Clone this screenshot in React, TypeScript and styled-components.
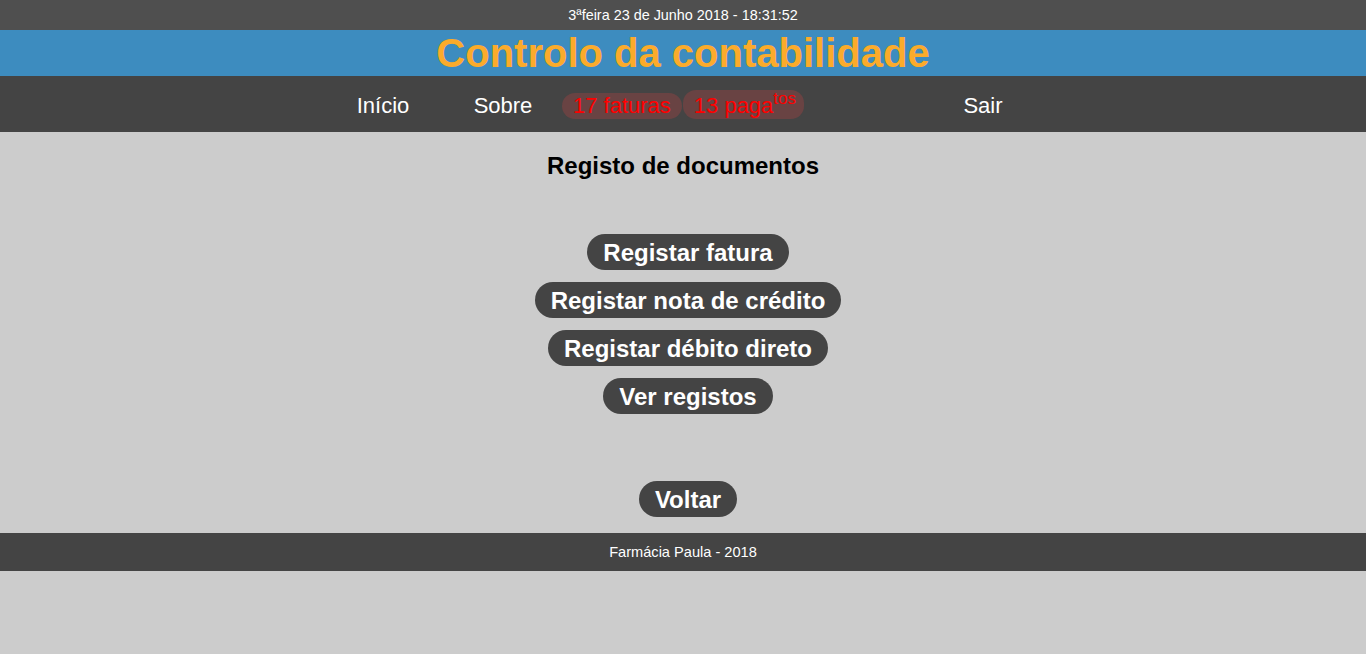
import React from "react";
import styled, { createGlobalStyle } from "styled-components";

const Global = createGlobalStyle`
  html, body { margin: 0; padding: 0; background: #cccccc; }
  body { font-family: "Liberation Sans", Arial, sans-serif; }
`;

const TopBar = styled.div`
  height: 30px;
  background: #4f4f4f;
  color: #ffffff;
  font-size: 14.4px;
  line-height: 30px;
  text-align: center;
`;

const Banner = styled.header`
  height: 46px;
  background: #3d8cbf;
  color: #fbab2b;
  font-size: 40px;
  font-weight: bold;
  line-height: 46px;
  text-align: center;
`;

const Nav = styled.nav`
  height: 56px;
  box-sizing: border-box;
  padding-top: 14px;
  background: #444444;
  display: flex;
  justify-content: center;
  align-items: flex-start;
`;

const NavList = styled.div`
  width: 720px;
  display: grid;
  grid-template-columns: repeat(6, 120px);
  align-items: baseline;
`;

const NavLink = styled.a`
  color: #ffffff;
  font-size: 22px;
  line-height: 26px;
  text-align: center;
  text-decoration: none;
`;

const Counters = styled.div`
  grid-column: span 2;
  display: flex;
  align-items: baseline;
  justify-content: center;
  gap: 1px;
`;

const Badge = styled.span`
  display: inline-block;
  padding: 0 11px;
  border-radius: 13px;
  background: #694343;
  color: #ff0000;
  font-size: 22px;
  line-height: 26px;
  white-space: nowrap;
  sup {
    font-size: 17px;
    line-height: 17px;
    vertical-align: 9px;
    margin-right: -3px;
  }
`;

const Main = styled.main`
  height: 401px;
  box-sizing: border-box;
  padding-top: 20px;
  display: flex;
  flex-direction: column;
  align-items: center;
`;

const Heading = styled.h2`
  margin: 0 0 54px;
  font-size: 24px;
  line-height: 28px;
  font-weight: bold;
  color: #000000;
`;

const ButtonStack = styled.div`
  display: flex;
  flex-direction: column;
  align-items: center;
  gap: 12px;
  padding-left: 10px;
`;

const PillButton = styled.a<{ $gapTop?: number }>`
  display: inline-block;
  height: 36px;
  padding: 0 16px;
  border-radius: 18px;
  background: #444444;
  color: #ffffff;
  font-size: 24px;
  font-weight: bold;
  line-height: 37px;
  text-decoration: none;
  margin-top: ${(p) => p.$gapTop ?? 0}px;
`;

const Footer = styled.footer`
  height: 38px;
  background: #444444;
  color: #ffffff;
  font-size: 14.6px;
  line-height: 38px;
  text-align: center;
`;

export default function App() {
  return (
    <>
      <Global />
      <TopBar>3ªfeira 23 de Junho 2018 - 18:31:52</TopBar>
      <Banner>Controlo da contabilidade</Banner>
      <Nav>
        <NavList>
          <NavLink href="#">Início</NavLink>
          <NavLink href="#">Sobre</NavLink>
          <Counters>
            <Badge>17 faturas</Badge>
            <Badge>
              13 paga<sup>tos</sup>
            </Badge>
          </Counters>
          <span />
          <NavLink href="#">Sair</NavLink>
        </NavList>
      </Nav>
      <Main>
        <Heading>Registo de documentos</Heading>
        <ButtonStack>
          <PillButton href="#">Registar fatura</PillButton>
          <PillButton href="#">Registar nota de crédito</PillButton>
          <PillButton href="#">Registar débito direto</PillButton>
          <PillButton href="#">Ver registos</PillButton>
          <PillButton href="#" $gapTop={55}>
            Voltar
          </PillButton>
        </ButtonStack>
      </Main>
      <Footer>Farmácia Paula - 2018</Footer>
    </>
  );
}
